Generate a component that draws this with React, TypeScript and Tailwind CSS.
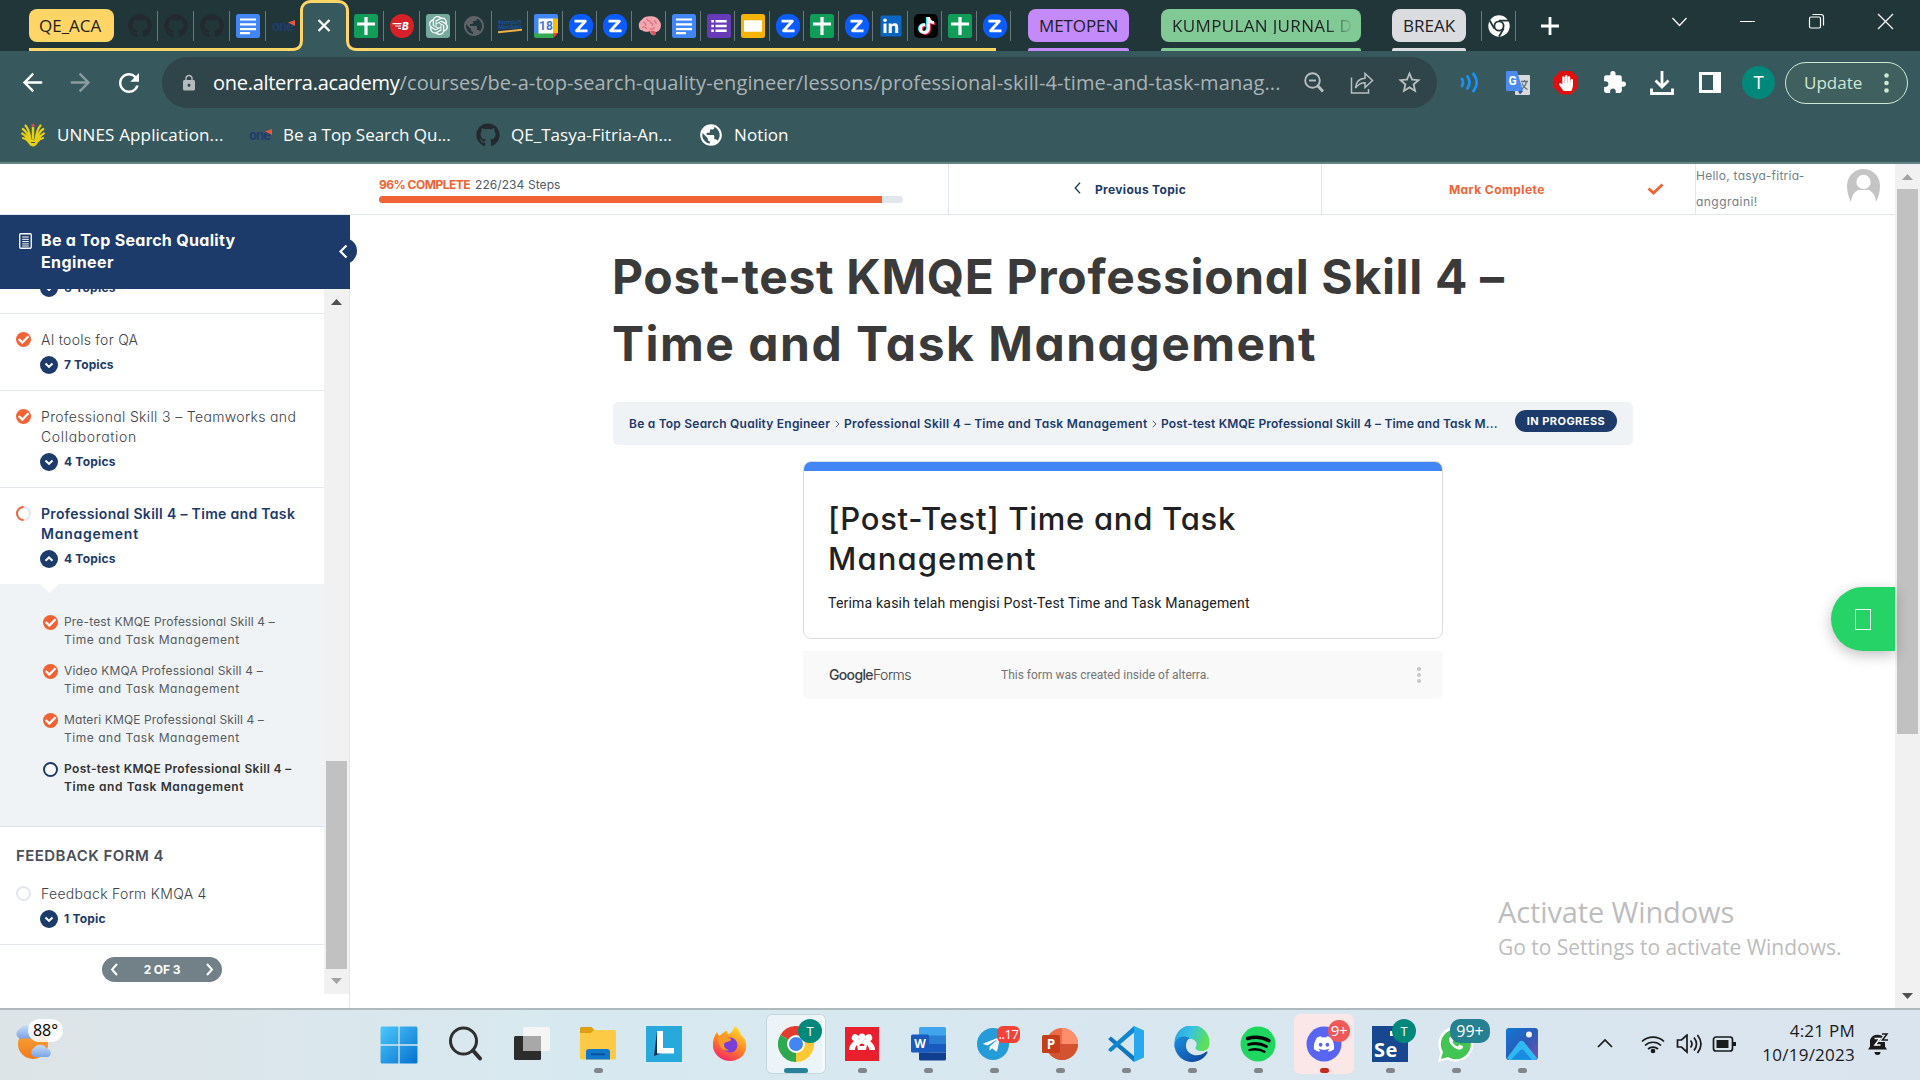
import type { ReactNode } from "react";
import { FaDiscord, FaGithub, FaHandPaper, FaTelegramPlane, FaTiktok, FaWhatsapp } from "react-icons/fa";
import { MdArrowBack, MdArrowForward, MdExtension, MdLock, MdPublic, MdRefresh, MdStarBorder } from "react-icons/md";
import { SiOpenai } from "react-icons/si";

const UI = "font-['Open_Sans','Noto_Sans',sans-serif]";

/* ---------- favicons ---------- */

function DocsIcon() {
  return (
    <svg className="size-6" viewBox="0 0 24 24">
      <rect width="24" height="24" rx="2.5" fill="#4285f4" />
      <path d="M4 5.500h16M4 10.300h16M4 15.100h16M4 19.200h10" stroke="#fff" strokeWidth="2.200" />
    </svg>
  );
}

function SheetsIcon() {
  return (
    <svg className="size-6" viewBox="0 0 24 24">
      <rect width="24" height="24" rx="2.5" fill="#0f9d58" />
      <path d="M3 10h18M12 3v18" stroke="#fff" strokeWidth="3.200" />
    </svg>
  );
}

function FormsIcon() {
  return (
    <svg className="size-6" viewBox="0 0 24 24">
      <rect width="24" height="24" rx="2.5" fill="#673ab7" />
      <path d="M8.500 7.200h11.200M8.500 12h11.200M8.500 16.800h11.200" stroke="#fff" strokeWidth="2.600" />
      <path d="M4.300 7.200h2.600M4.300 12h2.600M4.300 16.800h2.600" stroke="#fff" strokeWidth="2.600" />
    </svg>
  );
}

function SlidesIcon() {
  return (
    <svg className="size-6" viewBox="0 0 24 24">
      <rect width="24" height="24" rx="2.5" fill="#f4b400" />
      <rect x="3" y="6.300" width="18" height="11.400" fill="#fff" />
    </svg>
  );
}

function OneIcon() {
  return (
    <span className="relative flex h-6 w-6 items-center">
      <span className="font-['Inter',sans-serif] text-[13px] leading-6 font-bold tracking-[-0.9px] text-[#1f3d6e]">one</span>
      <svg className="absolute top-[5px] right-[1px] h-2 w-[7px]" viewBox="0 0 9 8">
        <path d="M0 3.500 9 0v8z" fill="#e8593a" />
      </svg>
    </span>
  );
}

function BIcon() {
  return (
    <svg className="size-6" viewBox="0 0 24 24">
      <circle cx="12" cy="12" r="12" fill="#d62128" />
      <path d="M2.500 9.700h9M5 12h6M8 14.300h3" stroke="#fff" strokeWidth="1.200" />
      <text x="12" y="15.500" fontFamily="Inter" fontSize="10" fontWeight="800" fontStyle="italic" fill="#fff">B</text>
    </svg>
  );
}

function KampusIcon() {
  return (
    <span className="relative flex h-6 w-6 flex-col justify-center font-['Inter',sans-serif] text-[6px] leading-[5px] font-bold tracking-[-0.1px] text-[#17509a]">
      <span className="-rotate-3">Kampus</span>
      <span className="-rotate-3 tracking-[-0.4px]">Merdeka</span>
      <span className="mt-px h-[2px] w-6 -rotate-6 bg-[#f0b04a]" />
    </span>
  );
}

function CalendarIcon() {
  return (
    <svg className="size-6" viewBox="0 0 24 24">
      <path d="M2 0h20a2 2 0 0 1 2 2v3H0V2a2 2 0 0 1 2-2z" fill="#4285f4" />
      <path d="M0 4.500h5V19H0z" fill="#4285f4" />
      <path d="M19.500 4.500H24V19h-4.500z" fill="#fbbc04" />
      <path d="M0 19h19.500v5H2a2 2 0 0 1-2-2z" fill="#34a853" />
      <path d="M19.500 19H24l-4.500 5z" fill="#ea4335" />
      <rect x="4.500" y="4.500" width="15" height="15" fill="#fff" />
      <text x="12" y="16.400" textAnchor="middle" fontFamily="Roboto" fontSize="12" fontWeight="700" fill="#3f74d8">18</text>
    </svg>
  );
}

function ZoomIcon() {
  return (
    <svg className="size-6" viewBox="0 0 24 24">
      <rect width="24" height="24" rx="11" fill="#0b5cff" />
      <path d="M5.500 7.200h10.800L7.500 16.800h11" fill="none" stroke="#fff" strokeWidth="2.800" strokeLinejoin="round" />
    </svg>
  );
}

function BrainIcon() {
  return (
    <svg className="size-6" viewBox="0 0 24 24">
      <path d="M1 13c-.8-3 .6-6 3-7.500C6 3 9 2 12 2.300c4-.6 8 1.500 9.500 4.700 1.800 2 2 6 .3 8.500-1.300 2-3 2.500-4.800 2.500 1 2 .2 3.500-1.500 3.300-2.500-.3-3-2.500-4-4-3 1-5.500.5-7-.8C2.500 16.500 1.300 15 1 13z" fill="#f4a5ae" />
      <path d="M5 8c2 .5 3 2 2.500 4M9 4.500c0 2 2 3 4 2.500M12 9c2-.5 3 1 2.500 3M17 6c-.8 1.500 0 3 2 3M4 13.500c2-1 4 0 5 1.500M11.500 15c2 .5 4 0 5-2" fill="none" stroke="#d8707e" strokeWidth="1.200" />
      <path d="M12 17.500c1.500-1 4-1 5.500.5 1 2 .2 3.500-1.500 3.300-2.500-.3-3-2.300-4-3.800z" fill="#e05468" />
    </svg>
  );
}

function LinkedinIcon() {
  return (
    <svg className="size-6" viewBox="0 0 24 24">
      <rect x="1.500" y="1.500" width="21" height="21" rx="1.500" fill="#0a66c2" />
      <path d="M4.500 9.500h3v9.500h-3zM9.700 9.500h2.900v1.300c.5-.9 1.500-1.600 3-1.600 3 0 3.600 2 3.600 4.500V19h-3v-4.700c0-1.100 0-2.500-1.600-2.500s-1.800 1.200-1.800 2.500V19H9.700z" fill="#fff" />
      <circle cx="6" cy="6.300" r="1.800" fill="#fff" />
    </svg>
  );
}

function TiktokIcon() {
  return (
    <span className="relative flex size-6 items-center justify-center rounded-[5px] bg-black">
      <FaTiktok className="absolute top-[3px] left-[3px] size-[17px] text-[#25f4ee]" />
      <FaTiktok className="absolute top-[4px] left-[5px] size-[17px] text-[#fe2c55]" />
      <FaTiktok className="absolute top-[3px] left-[4px] size-[17px] text-white" />
    </span>
  );
}

function GithubFav() {
  return <FaGithub className="size-6 text-[#24292f]" />;
}

/* ---------- tab strip ---------- */

function NarrowTab({ children, width, last = false }: { children: ReactNode; width: string; last?: boolean }) {
  return (
    <div className={`${width} flex h-[51px] shrink-0 items-center justify-between pl-[6px]`}>
      {children}
      {!last && <span className="h-[30px] w-px bg-[#6a787a]" />}
    </div>
  );
}

function Group({ label, width, pill, line, text }: { label: string; width: string; pill: string; line: string; text: string }) {
  return (
    <div className={`${width} flex h-[51px] shrink-0 flex-col pt-[9px]`}>
      <div className={`${pill} flex h-[33px] items-center overflow-hidden rounded-[8px] pl-[11px] text-[17px] leading-none whitespace-nowrap text-[#202124]`}>
        <span className={text}>{label}</span>
      </div>
      <div className={`${line} mt-auto h-[3px] rounded-t-[2px]`} />
    </div>
  );
}

function TabStrip() {
  const after = [ZoomIcon, ZoomIcon, BrainIcon, DocsIcon, FormsIcon, SlidesIcon, ZoomIcon, SheetsIcon, ZoomIcon, LinkedinIcon, TiktokIcon, SheetsIcon, ZoomIcon];
  return (
    <div className={`${UI} relative flex h-[51px] bg-[#213639]`}>
      <div className="flex w-[122px] shrink-0 pt-[9px] pl-[29px]">
        <div className="flex h-[33px] w-[85px] items-center rounded-[8px] bg-[#ffd666] pl-[10px] text-[17px] leading-none text-[#202124]">QE_ACA</div>
      </div>
      <NarrowTab width="w-[36px]"><GithubFav /></NarrowTab>
      <NarrowTab width="w-[36px]"><GithubFav /></NarrowTab>
      <NarrowTab width="w-[36px]"><GithubFav /></NarrowTab>
      <NarrowTab width="w-[36px]"><DocsIcon /></NarrowTab>
      <NarrowTab width="w-[36px]" last><OneIcon /></NarrowTab>
      <div className="w-[46px] shrink-0" />
      <NarrowTab width="w-[36px]"><SheetsIcon /></NarrowTab>
      <NarrowTab width="w-[36px]"><BIcon /></NarrowTab>
      <NarrowTab width="w-[36px]">
        <span className="flex size-6 items-center justify-center rounded-[3px] bg-[#75a99c]"><SiOpenai className="size-[19px] text-white" /></span>
      </NarrowTab>
      <NarrowTab width="w-[36px]"><MdPublic className="size-6 text-[#5f6368]" /></NarrowTab>
      <NarrowTab width="w-[36px]"><KampusIcon /></NarrowTab>
      <NarrowTab width="w-[34.5px]"><CalendarIcon /></NarrowTab>
      {after.map((Icon, i) => (
        <NarrowTab key={i} width="w-[34.5px]"><Icon /></NarrowTab>
      ))}
      <div className="ml-[17px] flex">
        <Group label="METOPEN" width="w-[101px]" pill="bg-[#c58af9]" line="bg-[#c58af9]" text="tracking-[-0.1px]" />
        <div className="w-8" />
        <Group label="KUMPULAN JURNAL D" width="w-[200px]" pill="bg-[#81c995]" line="bg-[#81c995]" text="tracking-[0.35px] bg-linear-to-r from-[#202124] from-[155px] to-[#202124]/5 to-[180px] bg-clip-text text-transparent" />
        <div className="w-[31px]" />
        <Group label="BREAK" width="w-[74px]" pill="bg-[#dadce0]" line="bg-[#dadce0]" text="" />
      </div>
      <div className="flex items-center pl-[15px]">
        <span className="h-[30px] w-px bg-[#6a787a]" />
        <svg className="ml-[6px] size-[22px]" viewBox="0 0 22 22">
          <circle cx="11" cy="11" r="10.700" fill="#fff" />
          <circle cx="11" cy="11" r="4.600" fill="#fff" stroke="#213639" strokeWidth="1.800" />
          <path d="M11 5.600h10M6.300 13.500 1.700 5.500M15.700 13.500 11 21.500" stroke="#213639" strokeWidth="1.800" />
        </svg>
        <span className="ml-[5px] h-[30px] w-px bg-[#6a787a]" />
        <svg className="ml-[25px] size-[18px]" viewBox="0 0 18 18">
          <path d="M9 0v18M0 9h18" stroke="#fff" strokeWidth="2.800" />
        </svg>
      </div>
      <svg className="absolute top-0 left-[29px] h-[51px] w-[968px]" viewBox="0 0 968 51" fill="none">
        <path d="M264 51c6 0 9-4 9-9V11c0-6 4-9.500 9-9.500h27c5 0 9 3.500 9 9.500v31c0 5 3 9 9 9z" fill="#37595d" />
        <path d="M0 49.500h264c6 0 8.500-4 8.500-9V11c0-6 4-9.500 9.500-9.500h27c5.500 0 9.500 3.500 9.500 9.500v29.500c0 5 2.500 9 8.500 9h640" stroke="#ffd666" strokeWidth="3" />
        <path d="m289.500 20 11 11M300.500 20l-11 11" stroke="#fff" strokeWidth="2.300" />
      </svg>
      <svg className="absolute top-3 left-[1671px] h-5 w-[228px]" viewBox="0 0 228 20" fill="none" stroke="#fff" strokeWidth="1.200">
        <path d="m1.500 6 7 7.500 7-7.500M69 9.500h15M207 2l15 15M222 2l-15 15" />
        <rect x="138.500" y="5" width="11" height="11" rx="1.500" />
        <path d="M141.500 2.500h8.500a2.500 2.500 0 0 1 2.500 2.500v8.500" />
      </svg>
    </div>
  );
}

/* ---------- toolbar and bookmarks ---------- */

function Toolbar() {
  return (
    <div className={`${UI} flex h-[63px] items-center bg-[#37595d]`}>
      <MdArrowBack className="ml-[18px] size-[29px] text-white" />
      <MdArrowForward className="ml-[19px] size-[29px] text-[#8a9c9e]" />
      <MdRefresh className="ml-[19px] size-[30px] text-white" />
      <div className="ml-[18px] flex h-[51px] w-[1275px] items-center rounded-full bg-[#2f454a] pl-[18px]">
        <MdLock className="size-[18px] text-[#b4babd]" />
        <div className="ml-[15px] flex w-[1082px] text-[20px] leading-none whitespace-nowrap">
          <span className="tracking-[-0.28px] text-white">one.alterra.academy</span>
          <span className="tracking-[0.1px] text-[#a9b3b5]">/courses/be-a-top-search-quality-engineer/lessons/professional-skill-4-time-and-task-manag...</span>
        </div>
        <svg className="ml-[7px] size-[23px]" viewBox="0 0 23 23" fill="none" stroke="#b9bfc1" strokeWidth="1.900">
          <circle cx="10.500" cy="9.500" r="7.300" />
          <path d="M7 9.500h7" />
          <path d="m15.500 14.500 5.500 6" strokeWidth="2.800" />
        </svg>
        <svg className="ml-[25px] size-[24px]" viewBox="0 0 24 24" fill="none" stroke="#b9bfc1" strokeWidth="1.500">
          <path d="M1.500 6.500v15.500h17v-4" />
          <path d="M5.500 17C6 11 9.500 7.500 15 7.300V2.500l7.500 7-7.500 7v-4.800c-4 0-7 1.500-9.500 5.300z" />
        </svg>
        <MdStarBorder className="ml-[22px] size-[27px] text-[#b9bfc1]" />
      </div>
      <svg className="ml-[23px] size-[21px]" viewBox="0 0 21 21" fill="none" stroke="#1a91f0" strokeWidth="2.800" strokeLinecap="round">
        <path d="M2 7q2 3.500 0 7M7.500 4.500q4 6 0 12M13.500 1.800q6.500 8.700 0 17.400" />
      </svg>
      <svg className="ml-[25px] size-[24px]" viewBox="0 0 24 24">
        <rect x="9" y="4" width="15" height="20" rx="1" fill="#d8dadd" />
        <path d="M0 1a1 1 0 0 1 1-1h10l6 20H1a1 1 0 0 1-1-1z" fill="#4d8af0" />
        <path d="M12 20h5l-3 3.500z" fill="#3450a8" />
        <path d="M15 10.500h7M18.500 9v1.500M20.500 10.500c-.8 4-3 6.500-5.500 8M16 12.500c1 2.500 3 4.500 5.500 6" stroke="#5d7580" strokeWidth="1.300" fill="none" />
        <text x="2.500" y="13.500" fontFamily="Roboto" fontSize="12" fontWeight="700" fill="#fff">G</text>
      </svg>
      <span className="ml-[24px] flex size-[24px] items-center justify-center bg-[#e40d0d] [clip-path:polygon(29%_0,71%_0,100%_29%,100%_71%,71%_100%,29%_100%,0_71%,0_29%)]">
        <FaHandPaper className="size-[16px] text-white" />
      </span>
      <MdExtension className="ml-[24px] size-[25px] text-white" />
      <svg className="ml-[23px] size-[24px]" viewBox="0 0 24 24" fill="none" stroke="#fff" strokeWidth="2.800">
        <path d="M12 0v16M5.500 9.500l6.500 6.500 6.500-6.500M1.500 17.500V22.500h21V17.500" />
      </svg>
      <svg className="ml-[25px] h-[21px] w-[22px]" viewBox="0 0 22 21">
        <path d="M0 0h22v21H0z" fill="#fff" />
        <path d="M3 3h11v15H3z" fill="#37595d" />
      </svg>
      <span className="ml-[21px] flex size-[33px] items-center justify-center rounded-full bg-[#00897b] font-['Roboto',sans-serif] text-[18px] text-white">T</span>
      <div className="ml-[10px] flex h-[42px] w-[123px] items-center rounded-full border-[1.5px] border-[#cfe8d4] bg-[#40605f] pl-[18px] text-[17px] leading-none text-[#cfe8d4]">
        <span className="w-[80px]">Update</span>
        <svg className="h-5 w-[5px]" viewBox="0 0 5 20" fill="#cfe8d4">
          <circle cx="2.500" cy="2.500" r="2.300" />
          <circle cx="2.500" cy="10" r="2.300" />
          <circle cx="2.500" cy="17.500" r="2.300" />
        </svg>
      </div>
    </div>
  );
}

function BookmarksBar() {
  return (
    <div className={`${UI} flex h-[48px] bg-[#37595d] pt-[9px] pl-[21px] text-[17px] leading-[23px] whitespace-nowrap text-white`}>
      <svg className="mr-[12px] size-[24px]" viewBox="0 0 24 24">
        <g fill="none" stroke="#e8cf12" strokeWidth="2.200" strokeLinecap="round">
          <path d="M9.500 17.500C9 12 7.500 6 4.500 2.500M8.500 18C7.500 13 5 8 1.800 6M8 18.500C6.500 15 4 12 1.200 10.500M8 19c-1.500-2-3.500-3.500-6-4" />
          <path d="M14.500 17.500c.5-5.500 2-11.500 5-15M15.500 18c1-5 3.500-10 6.700-12M16 18.500c1.500-3.500 4-6.500 6.800-8M16 19c1.500-2 3.500-3.500 6-4" />
        </g>
        <path d="M7.500 17c3-1 6-1 9 0 1 3-1 6-4.500 6.500-3.500-.5-5.500-3.500-4.500-6.500z" fill="#e8cf12" />
        <path d="M10 19.500h4" stroke="#37595d" strokeWidth="1" />
        <path d="M12 4v12" stroke="#e8cf12" strokeWidth="2.500" />
        <circle cx="12" cy="2.500" r="1.800" fill="#d84a3a" />
      </svg>
      <span className="w-[192px] tracking-[0.16px]">UNNES Application...</span>
      <OneIcon />
      <span className="ml-[10px] w-[193px] tracking-[-0.04px]">Be a Top Search Qu...</span>
      <FaGithub className="size-6 text-[#24292f]" />
      <span className="ml-[11px] w-[187px] tracking-[0.03px]">QE_Tasya-Fitria-An...</span>
      <MdPublic className="-mt-px size-[26px] text-white" />
      <span className="ml-[10px] tracking-[0.1px]">Notion</span>
    </div>
  );
}

/* ---------- course sidebar ---------- */

function CheckBadge() {
  return (
    <svg className="size-[15px] shrink-0" viewBox="0 0 15 15">
      <circle cx="7.500" cy="7.500" r="7.500" fill="#f16334" />
      <path d="m2.800 7 3.500 3.500 6.200-6.200" fill="none" stroke="#fff" strokeWidth="2.300" />
    </svg>
  );
}

function Ring({ className }: { className: string }) {
  return <span className={`${className} size-[15px] shrink-0 rounded-full border-2 bg-white`} />;
}

function Topics({ label, up = false, tracking }: { label: string; up?: boolean; tracking: string }) {
  return (
    <div className="mt-[6px] ml-10 flex h-[18px] items-center gap-[6px]">
      <svg className="size-[18px]" viewBox="0 0 18 18">
        <circle cx="9" cy="9" r="9" fill="#1c3a6a" />
        <path d={up ? "M5.500 10.800 9 7.500l3.500 3.300" : "M5.500 7.600 9 10.900l3.500-3.300"} fill="none" stroke="#fff" strokeWidth="2.100" />
      </svg>
      <span className={`${tracking} text-[12px] leading-none font-bold text-[#1c3a6a]`}>{label}</span>
    </div>
  );
}

function Lesson({ icon, lines, strong = false, border = true, topics }: { icon: ReactNode; lines: { t: string; ls: string }[]; strong?: boolean; border?: boolean; topics: ReactNode }) {
  return (
    <div className={`${border ? "border-b border-[#e2e7ed]" : ""} pt-4 pb-4`}>
      <div className="flex pl-4">
        <span className="mt-[2px] flex w-[25px] shrink-0">{icon}</span>
        <div className={`${strong ? "font-semibold text-[#1c3a6a]" : "font-light text-[#3c4248]"} text-[14px] leading-5 whitespace-nowrap`}>
          {lines.map((l) => (
            <div key={l.t} className={l.ls}>{l.t}</div>
          ))}
        </div>
      </div>
      {topics}
    </div>
  );
}

function SubTopic({ icon, first, ls, strong = false }: { icon: ReactNode; first: string; ls: string; strong?: boolean }) {
  return (
    <div className="flex h-[49px]">
      <span className="mt-[2px] flex w-[21px] shrink-0">{icon}</span>
      <div className={`${strong ? "font-semibold text-[#333]" : "text-[#565b60]"} text-[12px] leading-[18px] whitespace-nowrap`}>
        <div className={ls}>{first}</div>
        <div className={strong ? "tracking-[0.6px]" : "tracking-[0.54px]"}>Time and Task Management</div>
      </div>
    </div>
  );
}

function Sidebar() {
  return (
    <aside className="flex w-[350px] shrink-0 flex-col border-r border-[#e2e7ed]">
      <div className="relative flex h-[74px] w-[350px] bg-[#1c3a6a] pt-[15px] pl-[19px] text-[16px] leading-[21.5px] font-bold whitespace-nowrap text-white">
        <svg className="mt-[3px] mr-[9px] h-4 w-[13px]" viewBox="0 0 13 16">
          <rect x=".75" y=".75" width="11.500" height="14.500" rx="1" fill="none" stroke="#fff" strokeWidth="1.300" />
          <path d="M3.200 4h6.600M3.200 6.300h6.600M3.200 8.600h6.600M3.200 10.900h6.600M3.200 13h6.600" stroke="#fff" strokeWidth="1" />
        </svg>
        <div>
          <div className="tracking-[0.31px]">Be a Top Search Quality</div>
          <div className="tracking-[0.4px]">Engineer</div>
        </div>
        <span className="absolute top-[23px] right-[-7px] z-10 size-[26px] rounded-full bg-[#1c3a6a]" />
        <svg className="absolute top-[29px] left-[338px] z-20 h-[15px] w-[10px]" viewBox="0 0 10 15">
          <path d="M8.500 1.500 2.500 7.500l6 6" fill="none" stroke="#fff" strokeWidth="2.200" />
        </svg>
      </div>
      <div className="flex h-[719px]">
        <div className="w-[324px] shrink-0 bg-white">
          <div className="h-[25px] overflow-hidden border-b border-[#e2e7ed]">
            <div className="-mt-[16px]"><Topics label="6 Topics" tracking="tracking-[0.25px]" /></div>
          </div>
          <Lesson icon={<CheckBadge />} lines={[{ t: "AI tools for QA", ls: "tracking-[0.25px]" }]} topics={<Topics label="7 Topics" tracking="tracking-[0.1px]" />} />
          <Lesson icon={<CheckBadge />} lines={[{ t: "Professional Skill 3 – Teamworks and", ls: "tracking-[0.35px]" }, { t: "Collaboration", ls: "tracking-[0.65px]" }]} topics={<Topics label="4 Topics" tracking="tracking-[0.2px]" />} />
          <Lesson
            icon={
              <svg className="size-[15px]" viewBox="0 0 15 15" fill="none" strokeWidth="2">
                <circle cx="7.500" cy="7.500" r="6.500" stroke="#e2e7ed" />
                <path d="M7.500 1a6.500 6.500 0 0 0 0 13" stroke="#f16334" />
              </svg>
            }
            strong
            border={false}
            lines={[{ t: "Professional Skill 4 – Time and Task", ls: "tracking-[0.32px]" }, { t: "Management", ls: "tracking-[0.75px]" }]}
            topics={<Topics label="4 Topics" up tracking="tracking-[0.2px]" />}
          />
          <div className="relative h-[243px] border-b border-[#dde4ec] bg-[#eff3f6] pt-[29px] pl-[43px]">
            <span className="absolute top-0 left-[40px] h-[9px] w-[19px] bg-white [clip-path:polygon(0_0,100%_0,50%_100%)]" />
            <SubTopic icon={<CheckBadge />} first="Pre-test KMQE Professional Skill 4 –" ls="tracking-[0.17px]" />
            <SubTopic icon={<CheckBadge />} first="Video KMQA Professional Skill 4 –" ls="tracking-[0.19px]" />
            <SubTopic icon={<CheckBadge />} first="Materi KMQE Professional Skill 4 –" ls="tracking-[0.12px]" />
            <SubTopic icon={<Ring className="border-[#1c3a6a]" />} first="Post-test KMQE Professional Skill 4 –" ls="tracking-[0.34px]" strong />
          </div>
          <div className="h-[41px] pt-[17px] pl-4 text-[15px] leading-6 font-semibold tracking-[0.45px] text-[#4a4f5a]">FEEDBACK FORM 4</div>
          <Lesson icon={<Ring className="border-[#e2e7ed]" />} lines={[{ t: "Feedback Form KMQA 4", ls: "tracking-[0.3px]" }]} topics={<Topics label="1 Topic" tracking="tracking-[0.2px]" />} />
          <div className="mt-[12px] ml-[102px] flex h-[25px] w-[120px] items-center justify-between rounded-full bg-[#728188] px-2 text-[12px] leading-none font-bold tracking-[-0.1px] text-white">
            <svg className="h-[13px] w-[8px]" viewBox="0 0 8 13"><path d="M7 1 2 6.500 7 12" fill="none" stroke="#fff" strokeWidth="2" /></svg>
            <span>2 OF 3</span>
            <svg className="h-[13px] w-[8px]" viewBox="0 0 8 13"><path d="m1 1 5 5.500L1 12" fill="none" stroke="#fff" strokeWidth="2" /></svg>
          </div>
        </div>
        <div className="flex h-[705px] w-[25px] flex-col items-center bg-[#f1f1f1]">
          <span className="mt-[10px] h-[6px] w-[11px] bg-[#505050] [clip-path:polygon(50%_0,100%_100%,0_100%)]" />
          <span className="mt-[456px] h-[208px] w-[21px] bg-[#c1c1c1]" />
          <span className="mt-[9px] h-[6px] w-[11px] bg-[#a3a3a3] [clip-path:polygon(0_0,100%_0,50%_100%)]" />
        </div>
      </div>
    </aside>
  );
}

/* ---------- focus header ---------- */

function FocusHeader() {
  return (
    <header className="flex h-[51px] shrink-0 border-b border-[#e2e7ed] whitespace-nowrap">
      <div className="w-[350px] shrink-0" />
      <div className="w-[599px] shrink-0 border-r border-[#e2e7ed] pt-[13px] pl-[29px]">
        <div className="flex gap-[5px] text-[12px] leading-[16px]">
          <span className="w-[91px] font-bold tracking-[-0.5px] text-[#f16334]">96% COMPLETE</span>
          <span className="tracking-[0.08px] text-[#4f5a66]">226/234 Steps</span>
        </div>
        <div className="mt-[3px] h-[7px] w-[524px] overflow-hidden rounded-full bg-[#e2e7ed]">
          <div className="h-full w-[96%] bg-[#f16334]" />
        </div>
      </div>
      <div className="flex w-[373px] shrink-0 items-center border-r border-[#e2e7ed] pt-[1px] pl-[125px] text-[12px] font-bold text-[#1c3a6a]">
        <svg className="mr-[14px] mb-[3px] h-[12px] w-[7px]" viewBox="0 0 7 12"><path d="M6 .7 1.200 6 6 11.300" fill="none" stroke="#1c3a6a" strokeWidth="1.300" /></svg>
        <span className="tracking-[0.33px]">Previous Topic</span>
      </div>
      <div className="flex w-[374px] shrink-0 items-center border-r border-[#e2e7ed] pt-[1px] pl-[127px] text-[12px] font-bold text-[#f16334]">
        <span className="w-[198px] tracking-[0.44px]">Mark Complete</span>
        <svg className="mb-[1px] h-[12px] w-[17px]" viewBox="0 0 17 12"><path d="m1.500 5.500 5 4.500 9-8.500" fill="none" stroke="#f16334" strokeWidth="2.800" /></svg>
      </div>
      <div className="-mt-[1px] flex text-[12px] leading-[26px] text-[#728188]">
        <div className="w-[151px]">
          <div className="tracking-[0.26px]">Hello, tasya-fitria-</div>
          <div className="tracking-[0.45px]">anggraini!</div>
        </div>
        <svg className="mt-[6px] size-[33px]" viewBox="0 0 33 33">
          <path d="M16.500 0A16.500 16.500 0 0 1 33 16.500c0 6-1.500 12-4 16.500H4C1.500 28.500 0 22.500 0 16.500A16.500 16.500 0 0 1 16.500 0z" fill="#c4c4c4" />
          <circle cx="16.500" cy="13" r="7.200" fill="#fff" />
          <path d="M4 33c.5-5 2.500-9.500 7-12h11c4.500 2.500 6.500 7 7 12z" fill="#fff" />
        </svg>
      </div>
    </header>
  );
}

/* ---------- lesson body ---------- */

function LessonBody() {
  return (
    <main className="relative min-w-0 flex-1">
      <div className="ml-[263px] w-[1020px]">
        <h1 className="h-[187px] pt-[28px] text-[48px] leading-[67px] font-bold whitespace-nowrap text-[#3a3a3a]">
          <div className="-ml-[1px] tracking-[0.65px]">Post-test KMQE Professional Skill 4 –</div>
          <div className="-ml-[1px] tracking-[1.5px]">Time and Task Management</div>
        </h1>
        <div className="flex h-[43px] items-center rounded-[5px] bg-[#eff3f6] pl-[16px] text-[12px] leading-none font-semibold whitespace-nowrap text-[#1c3a6a]">
          <span className="w-[206px] tracking-[0.22px]">Be a Top Search Quality Engineer</span>
          <svg className="mr-[4px] h-[8px] w-[5px]" viewBox="0 0 5 8"><path d="m.8.800 3.200 3.200L.8 7.200" fill="none" stroke="#4f5a66" /></svg>
          <span className="w-[308px] tracking-[0.32px]">Professional Skill 4 – Time and Task Management</span>
          <svg className="mr-[4px] h-[8px] w-[5px]" viewBox="0 0 5 8"><path d="m.8.800 3.200 3.200L.8 7.200" fill="none" stroke="#4f5a66" /></svg>
          <span className="w-[354px] tracking-[0.14px]">Post-test KMQE Professional Skill 4 – Time and Task M...</span>
          <span className="mb-[5px] flex h-[22px] w-[102px] items-center justify-center rounded-full bg-[#1c3a6a] text-[11px] font-bold tracking-[0.45px] text-white">IN PROGRESS</span>
        </div>
        <div className="mt-[16px] ml-[190px] h-[178px] w-[640px] overflow-hidden rounded-[8px] border border-[#dadce0] bg-white">
          <div className="-mx-px -mt-px h-[10px] bg-[#4285f4]" />
          <div className="pt-[28px] pl-[24px] text-[31px] leading-[40px] font-medium text-[#202124]">
            <div className="tracking-[0.72px]">[Post-Test] Time and Task</div>
            <div className="tracking-[1.1px]">Management</div>
          </div>
          <div className="pt-[14px] pl-[24px] font-['Roboto',sans-serif] text-[14px] leading-[20px] tracking-[0.2px] text-[#202124]">Terima kasih telah mengisi Post-Test Time and Task Management</div>
        </div>
        <div className="mt-[12px] ml-[190px] flex h-[48px] w-[640px] items-center rounded-b-[6px] bg-[#f9f9f9] pl-[26px] text-[14px] leading-none text-[#3c4043]">
          <div className="flex w-[172px]">
            <span className="font-medium tracking-[-0.65px]">Google</span>
            <span className="font-light tracking-[-0.5px]">Forms</span>
          </div>
          <span className="w-[416px] font-['Roboto',sans-serif] text-[12px] text-[#757575]">This form was created inside of alterra.</span>
          <svg className="h-4 w-1" viewBox="0 0 4 16" fill="#c6c6c6">
            <circle cx="2" cy="2" r="2" />
            <circle cx="2" cy="8" r="2" />
            <circle cx="2" cy="14" r="2" />
          </svg>
        </div>
      </div>
      <div className="absolute top-[372px] right-0 flex h-[64px] w-[64px] items-center justify-center rounded-l-full bg-[#25d366] shadow-[0_4px_14px_rgba(0,0,0,0.25)]">
        <span className="h-[21px] w-[16px] border border-white/90" />
      </div>
      <div className={`${UI} absolute top-[677px] left-[1148px] whitespace-nowrap text-[#bdbdbd]`}>
        <div className="text-[29px] leading-[40px] tracking-[-0.12px]">Activate Windows</div>
        <div className="text-[21px] leading-[30px] tracking-[-0.02px]">Go to Settings to activate Windows.</div>
      </div>
    </main>
  );
}

/* ---------- taskbar ---------- */

function TaskItem({ children, dot = "bg-[#80868a] w-[9px]", tile = "" }: { children: ReactNode; dot?: string; tile?: string }) {
  return (
    <div className="flex h-[70px] w-[66px] shrink-0 justify-center pt-[4px]">
      <div className={`${tile} relative flex h-[60px] w-[60px] flex-col items-center rounded-[6px]`}>
        <div className="relative mt-[12px] size-9">{children}</div>
        <span className={`${dot} mt-[6px] h-[5px] rounded-full`} />
      </div>
    </div>
  );
}

function Badge({ children, className }: { children: ReactNode; className: string }) {
  return <span className={`${className} absolute flex items-center justify-center leading-none text-white`}>{children}</span>;
}

function Taskbar() {
  const none = "w-0";
  return (
    <footer className={`${UI} flex h-[70px] bg-linear-to-r from-[#dde4e7] via-[#d7e9f0] via-30% to-[#dae4ee]`}>
      <div className="relative w-[367px] shrink-0">
        <svg className="absolute top-[15px] left-[14px] h-[36px] w-[40px]" viewBox="0 0 40 36">
          <defs>
            <linearGradient id="sun" x1="0" y1="0" x2="0" y2="1"><stop offset="0" stopColor="#f9a83a" /><stop offset="1" stopColor="#f07a1c" /></linearGradient>
            <linearGradient id="cl" x1="0" y1="0" x2="0" y2="1"><stop offset="0" stopColor="#c6dcfb" /><stop offset="1" stopColor="#7ba4e6" /></linearGradient>
          </defs>
          <circle cx="19" cy="19" r="15" fill="url(#sun)" />
          <path d="M6 13.500a5 5 0 0 1 0-9.500 8 8 0 0 1 14 1c4 1 4 8 0 8.500z" fill="url(#cl)" />
          <path d="M20 32a5 5 0 0 1 0-9 7.500 7.500 0 0 1 13 1c5 0 5 8 0 8z" fill="url(#cl)" />
        </svg>
        <span className="absolute top-[9px] left-[28px] flex h-[23px] w-[35px] items-center justify-center rounded-full bg-white/85 pb-[2px] text-[16px] leading-none text-black">88°</span>
      </div>
      <TaskItem dot={none}>
        <svg className="-ml-[2px]" viewBox="0 0 36 36">
          <defs><linearGradient id="win" x1="0" y1="0" x2="1" y2="1"><stop offset="0" stopColor="#4cc8fb" /><stop offset="1" stopColor="#0670cf" /></linearGradient></defs>
          <path d="M2 .5h15.400V17.300H.5V2A1.500 1.500 0 0 1 2 .5zM18.600.5H34A1.500 1.500 0 0 1 35.500 2v15.300H18.600zM.5 18.600h16.900V35.500H2A1.500 1.500 0 0 1 .5 34zM18.600 18.600h16.900V34a1.500 1.500 0 0 1-1.500 1.500H18.600z" fill="url(#win)" />
        </svg>
      </TaskItem>
      <TaskItem dot={none}>
        <svg viewBox="0 0 36 36" fill="none" stroke="#2f2f2f">
          <circle cx="15.500" cy="15" r="13" strokeWidth="3" />
          <path d="m25 24.500 7 8" strokeWidth="4" strokeLinecap="round" />
        </svg>
      </TaskItem>
      <TaskItem dot={none}>
        <svg viewBox="0 0 36 36">
          <rect x="0" y="10" width="27" height="24" rx="1.500" fill="#2c2c2c" />
          <rect x="9" y="1" width="27" height="24" rx="1.500" fill="#f5f5f5" />
          <path d="M9 10h18v15H10.500A1.500 1.500 0 0 1 9 23.500z" fill="#a8a8a8" />
        </svg>
      </TaskItem>
      <TaskItem>
        <svg viewBox="0 0 36 36">
          <path d="M0 2.500A1.500 1.500 0 0 1 1.500 1h10l4 4v4H0z" fill="#dda010" />
          <path d="M0 7h11l3-3h20.500A1.500 1.500 0 0 1 36 5.500V32a1.500 1.500 0 0 1-1.500 1.500h-33A1.500 1.500 0 0 1 0 32z" fill="#fdca45" />
          <path d="M6 33.500V26a3 3 0 0 1 3-3h18a3 3 0 0 1 3 3v7.500z" fill="#0f78cc" />
          <path d="M11 28.300h14" stroke="#0a4e94" strokeWidth="1.800" />
        </svg>
      </TaskItem>
      <TaskItem dot={none}>
        <svg viewBox="0 0 36 36">
          <path d="M0 0h36v36H0z" fill="#27a9dc" />
          <path d="m11 5-3 25 8-3z" fill="#0a2a52" />
          <path d="M11 5h6v17h11v5.500H11z" fill="#fff" />
        </svg>
      </TaskItem>
      <TaskItem dot={none}>
        <svg viewBox="0 0 36 36">
          <defs>
            <linearGradient id="ff" x1=".8" y1="0" x2=".3" y2="1"><stop offset="0" stopColor="#ffe434" /><stop offset=".5" stopColor="#ff8a1e" /><stop offset="1" stopColor="#fb2368" /></linearGradient>
          </defs>
          <path d="M23 0c4 3 5 6 6 9 4 3 6 8 5 13-1 8-8 13-16 13S2 29 1 21C.5 15 2 10 5 6l2 4c3-1.500 5-5 8-5l1 3c3 0 5-4 7-8z" fill="url(#ff)" />
          <circle cx="18" cy="19" r="7.500" fill="#7a3fd6" />
          <path d="M6 11c4-2 8 0 11 1 2 .5 3 2 1 3-3 1-6 1-6 4s3 5 6 5c-6 2-12-2-12-13z" fill="#ff9a2a" />
        </svg>
      </TaskItem>
      <TaskItem tile="bg-white/50 shadow-[inset_0_0_0_1px_#c6d6dd,inset_-5px_0_0_-1px_rgba(255,255,255,0.5)]" dot="w-6 bg-[#28829a]">
        <svg viewBox="0 0 36 36">
          <circle cx="18" cy="18" r="18" fill="#fff" />
          <path d="M18 18 2.400 9A18 18 0 0 1 33.600 9z" fill="#e33b2e" />
          <path d="M18 18 33.600 9A18 18 0 0 1 18 36z" fill="#fcc934" />
          <path d="M18 18v18A18 18 0 0 1 2.400 9z" fill="#2da94f" />
          <circle cx="18" cy="18" r="9" fill="#fff" />
          <circle cx="18" cy="18" r="7" fill="#4285f4" />
        </svg>
        <Badge className="-top-[7px] left-[20px] size-6 rounded-full bg-[#00897b] text-[13px]">T</Badge>
      </TaskItem>
      <TaskItem>
        <svg viewBox="0 0 36 36">
          <path d="M1 1h34v34H1z" fill="#ea1f2d" />
          <path d="M5 24c0-4 2-6.500 5-9a3.500 3.500 0 1 1 4.500-2l1.500.8a3.500 3.500 0 1 1 4 0l1.500-.8a3.500 3.500 0 1 1 4.500 2c3 2.500 5 5 5 9h-6c0-2-.5-4-2-5l-1 5h-8l-1-5c-1.500 1-2 3-2 5z" fill="#fff" />
          <path d="M15.500 20a2.500 2.500 0 0 1 5 0z" fill="#ea1f2d" />
        </svg>
      </TaskItem>
      <TaskItem>
        <svg viewBox="0 0 36 36">
          <path d="M9 2.500A1.500 1.500 0 0 1 10.500 1h24A1.500 1.500 0 0 1 36 2.500V10H9z" fill="#41a5ee" />
          <path d="M9 9.500h27v9H9z" fill="#2b7cd3" />
          <path d="M9 18h27v8.500H9z" fill="#185abd" />
          <path d="M9 26.500h27V33a1.500 1.500 0 0 1-1.500 1.500h-24A1.500 1.500 0 0 1 9 33z" fill="#103f91" />
          <rect x="1" y="8.500" width="18" height="18" rx="1.500" fill="#185abd" />
          <text x="10" y="22" textAnchor="middle" fontFamily="Open Sans" fontSize="12" fontWeight="700" fill="#fff">W</text>
        </svg>
      </TaskItem>
      <TaskItem>
        <svg viewBox="0 0 36 36"><circle cx="17" cy="18" r="16" fill="#259bd8" /></svg>
        <FaTelegramPlane className="absolute top-[9px] left-[6px] size-[19px] text-white" />
        <Badge className="top-0 left-[21px] h-[17px] w-[23px] rounded-[6px] bg-[#f2433a] pb-px text-[13px] tracking-[-0.4px]">..17</Badge>
      </TaskItem>
      <TaskItem>
        <svg viewBox="0 0 36 36">
          <circle cx="20" cy="18" r="16" fill="#ed6c47" />
          <path d="M20 2a16 16 0 0 1 16 16H20z" fill="#ff8f6b" />
          <path d="M4 18h32a16 16 0 0 1-32 0z" fill="#d35230" />
          <rect x="0" y="9" width="18" height="18" rx="1.500" fill="#c43e1c" />
          <text x="9" y="23" textAnchor="middle" fontFamily="Open Sans" fontSize="13.500" fontWeight="700" fill="#fff">P</text>
        </svg>
      </TaskItem>
      <TaskItem>
        <svg viewBox="0 0 36 36">
          <path d="M3 10.500 26 30v6L.5 13.500v-1z" fill="#0f76bf" />
          <path d="m3 26 23-19.500V0L.5 23v1.500z" fill="#0f86d2" />
          <path d="m26 0 10 4.500v27L26 36z" fill="#28a8ef" />
        </svg>
      </TaskItem>
      <TaskItem>
        <svg viewBox="0 0 36 36">
          <defs>
            <linearGradient id="edge" x1="0" y1="0" x2="1" y2=".3"><stop offset="0" stopColor="#2b9fe6" /><stop offset=".5" stopColor="#38c3e0" /><stop offset="1" stopColor="#5be05a" /></linearGradient>
            <linearGradient id="edge2" x1="0" y1="0" x2="1" y2="1"><stop offset="0" stopColor="#1a90e0" /><stop offset="1" stopColor="#0c3f96" /></linearGradient>
          </defs>
          <path d="M.5 16A17.500 17.500 0 0 1 35.500 17c0 6-4 8-8 8-4.500 0-6.500-2-6-3.500C24 18 22 13 16 13 9 13 3 17 .5 22z" fill="url(#edge)" />
          <path d="M.5 18c1-6 8-10 15-6-4 3-5 10-1 14 5 5 13 4 18-.5 1.500 0 1 1 .5 2A17.500 17.500 0 0 1 .5 18z" fill="url(#edge2)" />
        </svg>
      </TaskItem>
      <TaskItem>
        <svg viewBox="0 0 36 36">
          <circle cx="18" cy="18" r="17.500" fill="#1ed760" />
          <g fill="none" stroke="#000" strokeLinecap="round">
            <path d="M7.500 12.500c7-2 15-1.500 21.500 2.200" strokeWidth="3.400" />
            <path d="M8.500 18.500c6-1.700 12.500-1 18 2" strokeWidth="2.800" />
            <path d="M9.500 24c5-1.300 10.500-.8 15 1.700" strokeWidth="2.300" />
          </g>
        </svg>
      </TaskItem>
      <TaskItem tile="bg-[#fbe6e8]" dot="w-[9px] bg-[#c42b1c]">
        <svg viewBox="0 0 36 36"><circle cx="18" cy="18" r="17.500" fill="#5865f2" /></svg>
        <FaDiscord className="absolute top-[7px] left-[7px] size-[22px] text-white" />
        <Badge className="-top-[6px] left-[22px] size-[22px] rounded-full bg-[#ee5a5a] pb-px text-[15px] tracking-[-0.3px]">9+</Badge>
      </TaskItem>
      <TaskItem>
        <div className="flex size-9 flex-col items-start bg-[#17478f] pl-[2px] text-[20px] leading-none font-bold tracking-[0.4px] text-white">
          <span className="mt-[5px] ml-[16px] h-[5px] w-[6px] bg-white" />
          <span className="mt-[4px]">Se</span>
        </div>
        <Badge className="-top-[7px] left-[20px] size-6 rounded-full bg-[#00897b] text-[13px]">T</Badge>
      </TaskItem>
      <TaskItem>
        <svg viewBox="0 0 36 36">
          <path d="M0 36 2.500 26.500A17.500 17.500 0 1 1 9.500 33.500z" fill="#fff" />
          <path d="M3 33 5 26A15 15 0 1 1 10 31z" fill="#42c553" />
        </svg>
        <FaWhatsapp className="absolute top-[1px] left-[2px] size-[32px] text-white [clip-path:circle(32%_at_50%_50%)]" />
        <Badge className="-top-[7px] left-[12px] h-[24px] w-[40px] rounded-[10px] bg-[#25808f] text-[16px]">99+</Badge>
      </TaskItem>
      <TaskItem>
        <svg viewBox="0 0 36 36">
          <defs>
            <linearGradient id="ph" x1="0" y1="0" x2="1" y2="1"><stop offset="0" stopColor="#1079d6" /><stop offset=".5" stopColor="#2a5cb8" /><stop offset="1" stopColor="#7a4fb0" /></linearGradient>
          </defs>
          <rect x="2" y="2" width="32" height="32" rx="3" fill="url(#ph)" />
          <path d="m3 32 12-16q2.500-2.500 5 0l13 16-1.500 2H5z" fill="#2fb8f2" />
          <path d="m7 33.500 9-9q2-2 4 0l8 9.500z" fill="#1a8be0" />
          <circle cx="25" cy="8.500" r="3" fill="#f3f3f3" />
        </svg>
      </TaskItem>
      <div className="ml-auto flex h-[70px] items-start pt-[9px] pr-[31px] text-[#1a1a1a]">
        <svg className="mt-[15px] h-[42px] w-[142px]" viewBox="0 0 142 42" fill="none" stroke="#1a1a1a" strokeWidth="1.700">
          <path d="m3 13 7-7 7 7" />
          <path d="M47 7.500a16 16 0 0 1 22 0M50 11.500a11.500 11.500 0 0 1 16 0M53 15a7.500 7.500 0 0 1 10 0" />
          <circle cx="58" cy="17" r="1.500" fill="#1a1a1a" />
          <path d="M82.500 6.500h4l5.500-5v17l-5.500-5h-4zM95.500 7q3 3.500 0 7M99 4q5 6.500 0 13M102.500 1.500q7 9 0 18" transform="translate(0 -.5)" />
          <rect x="118.500" y="3" width="19" height="14" rx="2.500" />
          <path d="M121.500 6h12v8h-12z" fill="#1a1a1a" stroke="none" />
          <path d="M139.500 8v4" strokeWidth="3" />
        </svg>
        <div className="mr-[12px] w-[118px] text-right text-[17px] leading-[24px] tracking-[0.25px]">
          <div>4:21 PM</div>
          <div>10/19/2023</div>
        </div>
        <svg className="mt-[13px] h-[24px] w-[22px]" viewBox="0 0 22 24">
          <path d="M1 17.500h19l-2-3V8a8 8 0 0 0-15 0v6.500zM7.500 20h6a3 3 0 0 1-6 0z" fill="#1a1a1a" />
          <path d="M7.500 6.500h5.500L8 13h5.500" fill="none" stroke="#fff" strokeWidth="1.500" />
          <path d="M15 2h5l-4.500 6H21" fill="none" stroke="#dae4ee" strokeWidth="4" />
          <path d="M15 2h5l-4.500 6H21" fill="none" stroke="#1a1a1a" strokeWidth="1.500" />
        </svg>
      </div>
    </footer>
  );
}

export default function App() {
  return (
    <div className="flex h-[1080px] w-[1920px] flex-col overflow-hidden bg-white font-['Inter',sans-serif] [font-feature-settings:'cv11']">
      <TabStrip />
      <Toolbar />
      <BookmarksBar />
      <div className="h-[2px] bg-[#668487]" />
      <div className="flex h-[844px] shrink-0">
        <div className="flex w-[1895px] flex-col">
          <FocusHeader />
          <div className="flex min-h-0 flex-1">
            <Sidebar />
            <LessonBody />
          </div>
        </div>
        <div className="flex w-[25px] flex-col items-center bg-[#f1f1f1]">
          <span className="mt-[10px] h-[6px] w-[11px] bg-[#a3a3a3] [clip-path:polygon(50%_0,100%_100%,0_100%)]" />
          <span className="mt-[9px] h-[545px] w-[21px] bg-[#c1c1c1]" />
          <span className="mt-auto mb-[9px] h-[6px] w-[11px] bg-[#505050] [clip-path:polygon(0_0,100%_0,50%_100%)]" />
        </div>
      </div>
      <div className="h-[2px] bg-[#adb9bd]" />
      <Taskbar />
    </div>
  );
}
